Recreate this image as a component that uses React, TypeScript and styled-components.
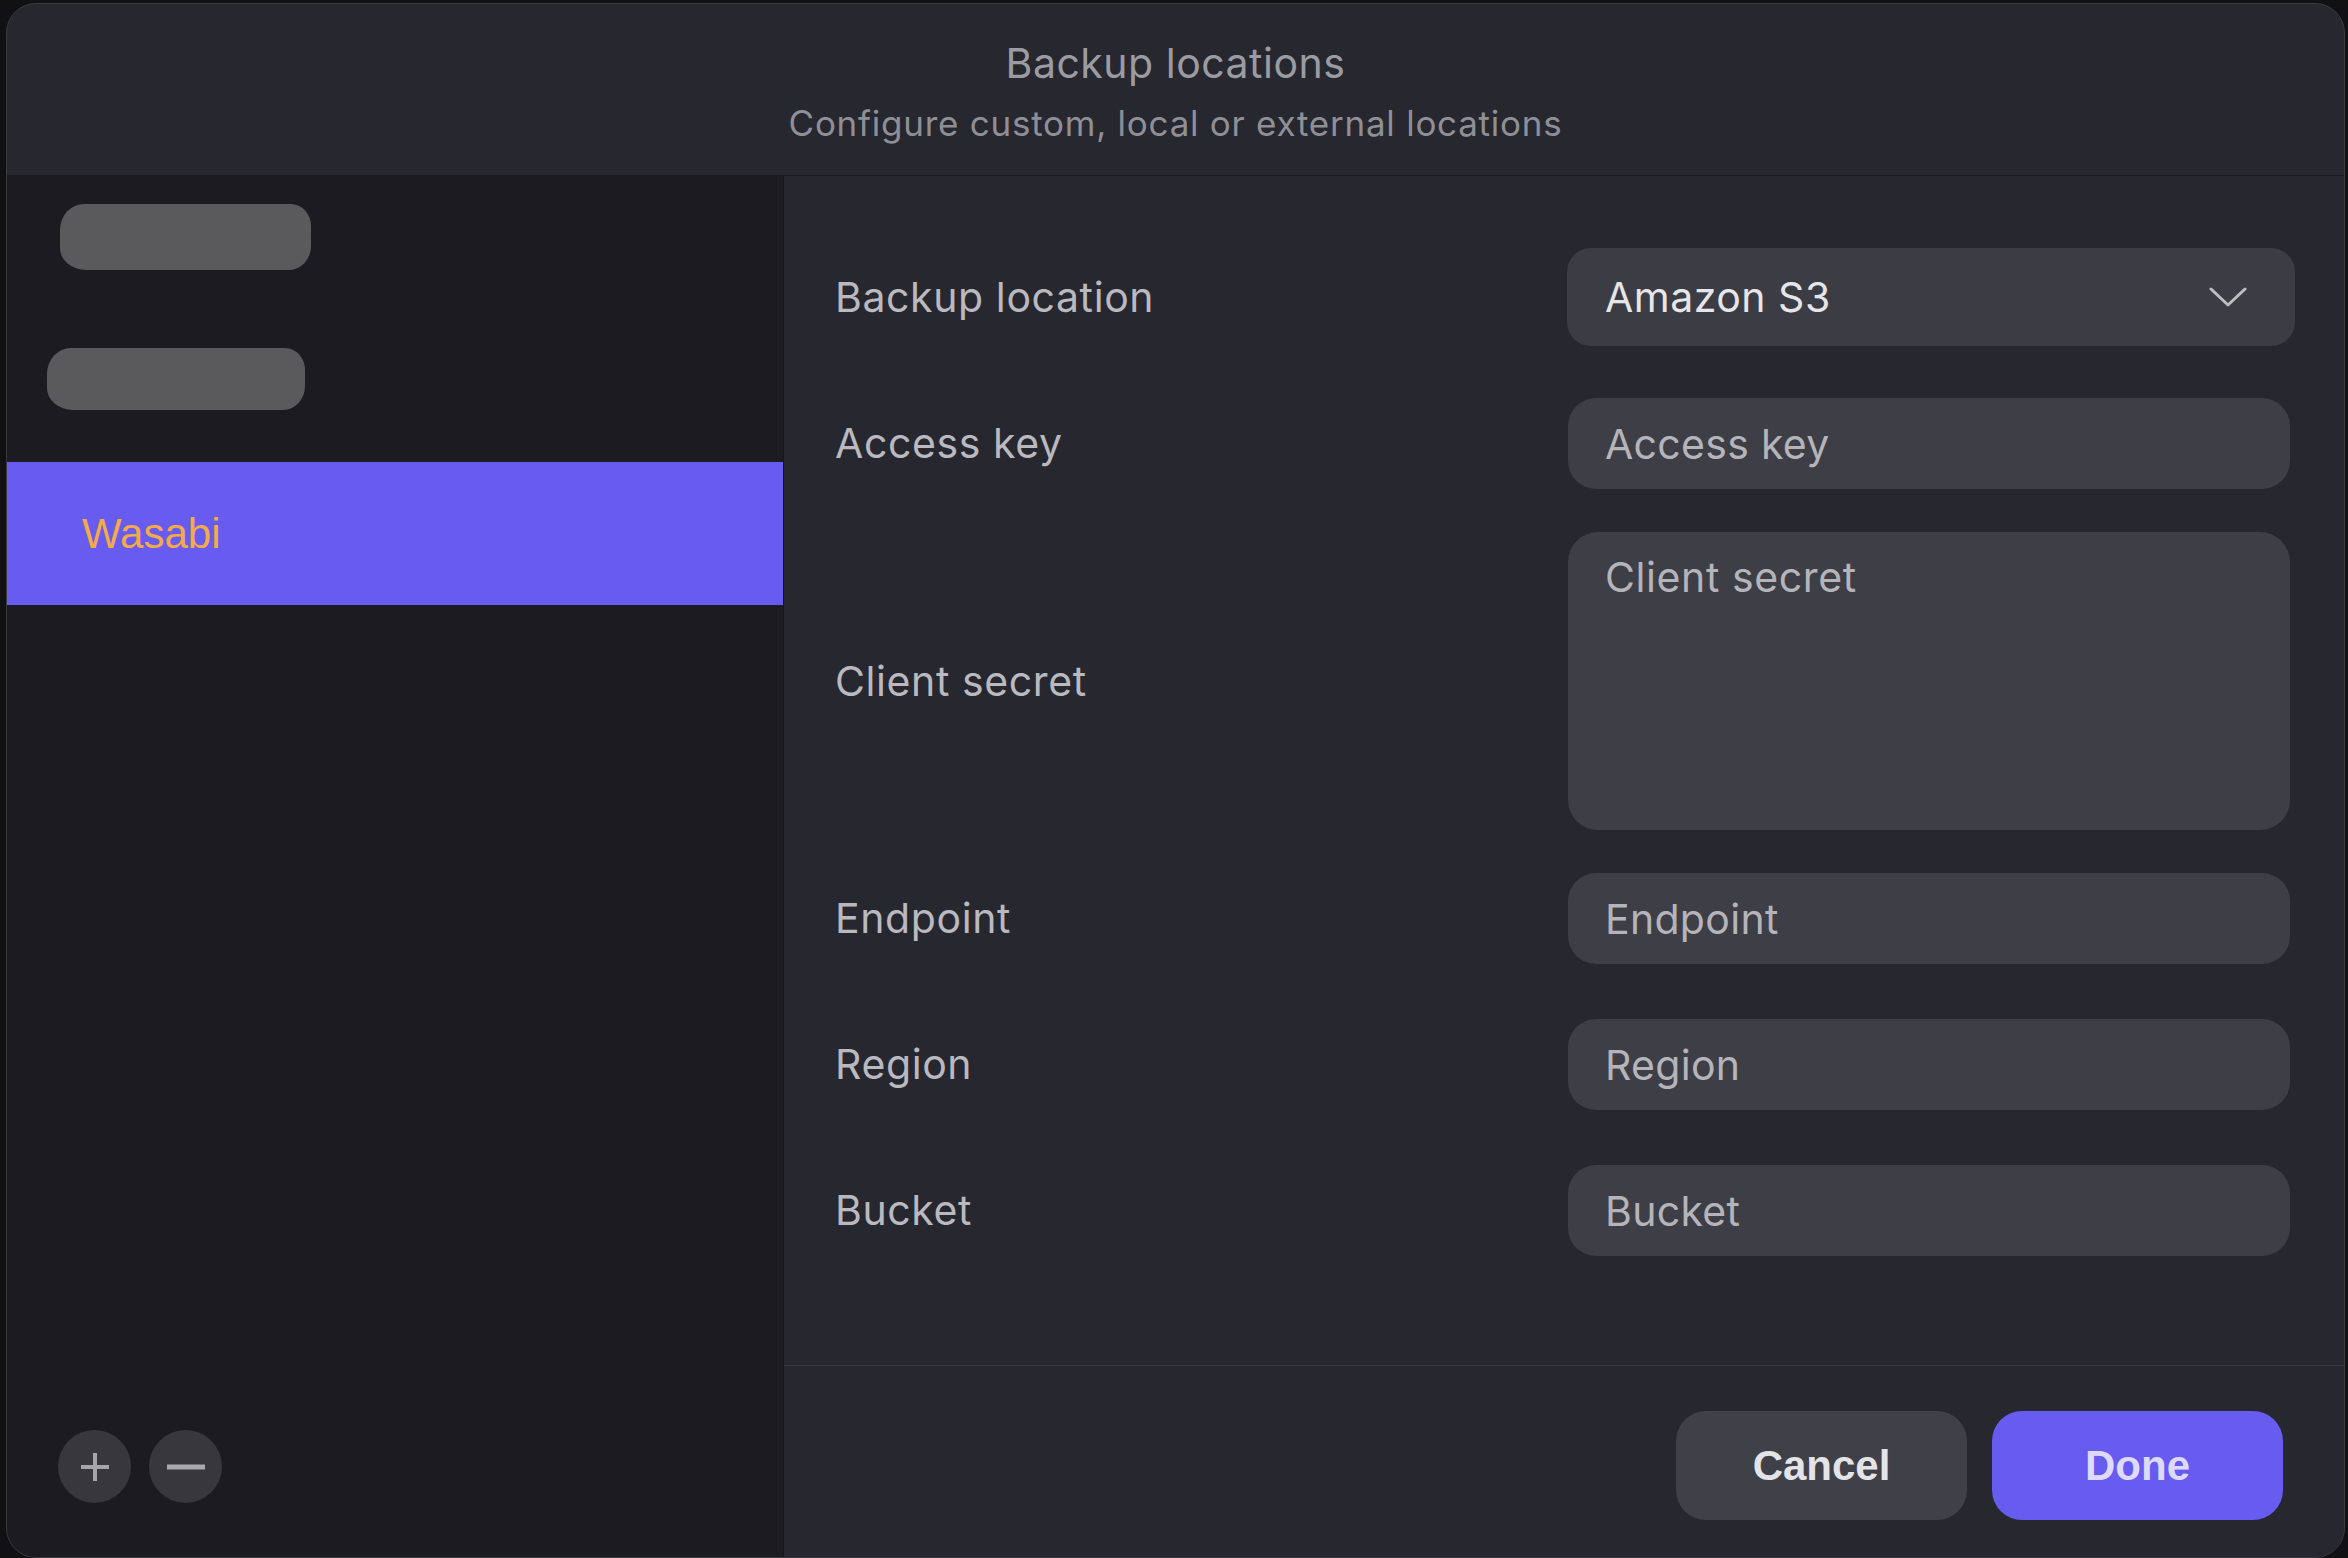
import React from "react";
import styled, { createGlobalStyle } from "styled-components";

const Global = createGlobalStyle`
  html, body { margin: 0; padding: 0; background: #111113; }
  #root { width: 2348px; height: 1558px; overflow: hidden; }
  * { box-sizing: border-box; }
`;

const Page = styled.div`
  width: 2348px;
  height: 1558px;
  padding: 3px 3px 0 6px;
  background: #111113;
`;

const Dialog = styled.div`
  width: 100%;
  height: 100%;
  border: 1px solid #3a3a41;
  border-radius: 30px;
  overflow: hidden;
  display: flex;
  flex-direction: column;
  background: #272730;
`;

const Header = styled.header`
  height: 172px;
  flex: none;
  padding-top: 35px;
  display: flex;
  flex-direction: column;
  align-items: center;
  gap: 14px;
  border-bottom: 1px solid #1a1a1f;
  font-family: Inter, "Noto Sans", sans-serif;
`;

const Title = styled.h1`
  margin: 0;
  font-size: 41px;
  line-height: 49px;
  font-weight: 400;
  color: #9b9ba2;
  letter-spacing: 0.5px;
`;

const Subtitle = styled.p`
  margin: 0;
  font-size: 35px;
  line-height: 42px;
  color: #8f8f96;
  letter-spacing: 0.75px;
`;

const Body = styled.div`
  flex: 1;
  display: flex;
  min-height: 0;
`;

const Sidebar = styled.aside`
  width: 777px;
  flex: none;
  background: #1c1b21;
  border-right: 1px solid #16161a;
  display: flex;
  flex-direction: column;
`;

const List = styled.ul`
  list-style: none;
  margin: 0;
  padding: 0;
  flex: 1;
`;

const Item = styled.li<{ $selected?: boolean }>`
  height: 143px;
  display: flex;
  align-items: center;
  padding-left: 75px;
  background: ${(p) => (p.$selected ? "#675cef" : "transparent")};
  font-family: "Liberation Sans", Arial, sans-serif;
  font-size: 42px;
  color: ${(p) => (p.$selected ? "#f3aa47" : "#c8c8cc")};
`;

const Redaction = styled.span<{ $w: number; $h: number; $dx: number; $dy: number }>`
  display: block;
  width: ${(p) => p.$w}px;
  height: ${(p) => p.$h}px;
  margin-left: ${(p) => p.$dx}px;
  margin-top: ${(p) => p.$dy}px;
  background: #5a5a5d;
  border-radius: 24px 20px 22px 26px / 26px 22px 24px 22px;
`;

const SideFooter = styled.div`
  display: flex;
  gap: 18px;
  padding: 0 0 54px 51px;
`;

const RoundButton = styled.button`
  width: 73px;
  height: 73px;
  border-radius: 50%;
  border: none;
  background: #38373d;
  display: flex;
  align-items: center;
  justify-content: center;
  padding: 0;
  color: #a5a5aa;
`;

const Main = styled.section`
  flex: 1;
  display: flex;
  flex-direction: column;
  background: #272730;
`;

const Form = styled.div`
  flex: 1;
  padding: 72px 49px 0 51px;
  display: flex;
  flex-direction: column;
  font-family: Inter, "Noto Sans", sans-serif;
`;

const FieldRow = styled.div<{ $space: number }>`
  display: flex;
  align-items: center;
  justify-content: space-between;
  margin-top: ${(p) => p.$space}px;
`;

const Label = styled.label`
  font-size: 41px;
  line-height: 49px;
  color: #b9b9bf;
  letter-spacing: 0.6px;
`;

const SelectBox = styled.div`
  width: 728px;
  height: 98px;
  border-radius: 24px;
  background: #3c3c44;
  display: flex;
  align-items: center;
  justify-content: space-between;
  padding: 0 48px 0 38px;
  font-size: 41px;
  color: #e6e6ea;
  letter-spacing: 0.5px;
`;

const TextInput = styled.input`
  width: 722px;
  height: 91px;
  margin-right: 5px;
  border: none;
  outline: none;
  border-radius: 28px;
  background: #3e3e46;
  padding: 0 0 0 37px;
  font-family: Inter, "Noto Sans", sans-serif;
  font-size: 41px;
  letter-spacing: 0.3px;
  color: #e6e6ea;
  &::placeholder { color: #b4b4ba; opacity: 1; }
`;

const TextArea = styled.textarea`
  width: 722px;
  height: 298px;
  margin-right: 5px;
  border: none;
  outline: none;
  resize: none;
  border-radius: 30px;
  background: #3e3e46;
  padding: 21px 37px;
  font-family: Inter, "Noto Sans", sans-serif;
  font-size: 41px;
  line-height: 49px;
  letter-spacing: 0.6px;
  color: #e6e6ea;
  &::placeholder { color: #b4b4ba; opacity: 1; }
`;

const Divider = styled.hr`
  margin: 0;
  border: none;
  border-top: 1px solid #393941;
`;

const Footer = styled.div`
  height: 191px;
  flex: none;
  display: flex;
  justify-content: flex-end;
  align-items: flex-start;
  gap: 25px;
  padding: 45px 61px 0 0;
`;

const ActionButton = styled.button<{ $primary?: boolean }>`
  width: 291px;
  height: 109px;
  border: none;
  border-radius: 30px;
  background: ${(p) => (p.$primary ? "#675cef" : "#404048")};
  color: ${(p) => (p.$primary ? "#dedaff" : "#e4e4e8")};
  font-family: "Liberation Sans", Arial, sans-serif;
  font-weight: 700;
  font-size: 42px;
`;

const fields: { label: string; space: number }[] = [
  { label: "Endpoint", space: 43 },
  { label: "Region", space: 55 },
  { label: "Bucket", space: 55 },
];

export default function App() {
  return (
    <Page>
      <Global />
      <Dialog>
        <Header>
          <Title>Backup locations</Title>
          <Subtitle>Configure custom, local or external locations</Subtitle>
        </Header>
        <Body>
          <Sidebar>
            <List>
              <Item>
                <Redaction $w={251} $h={66} $dx={-22} $dy={-22} />
              </Item>
              <Item>
                <Redaction $w={258} $h={62} $dx={-35} $dy={-24} />
              </Item>
              <Item $selected>Wasabi</Item>
            </List>
            <SideFooter>
              <RoundButton aria-label="Add">
                <svg width="30" height="30" viewBox="0 0 30 30">
                  <path d="M15 1v28M1 15h28" stroke="#a5a5aa" strokeWidth="4" />
                </svg>
              </RoundButton>
              <RoundButton aria-label="Remove">
                <svg width="38" height="10" viewBox="0 0 38 10">
                  <path d="M0 5h38" stroke="#a8a8ae" strokeWidth="5" />
                </svg>
              </RoundButton>
            </SideFooter>
          </Sidebar>
          <Main>
            <Form>
              <FieldRow $space={0}>
                <Label>Backup location</Label>
                <SelectBox>
                  <span>Amazon S3</span>
                  <svg width="38" height="20" viewBox="0 0 38 20">
                    <path d="M2 2l17 16L36 2" fill="none" stroke="#bdbdc2" strokeWidth="3" strokeLinecap="round" strokeLinejoin="round" />
                  </svg>
                </SelectBox>
              </FieldRow>
              <FieldRow $space={52}>
                <Label>Access key</Label>
                <TextInput placeholder="Access key" />
              </FieldRow>
              <FieldRow $space={43}>
                <Label>Client secret</Label>
                <TextArea placeholder="Client secret" />
              </FieldRow>
              {fields.map((f) => (
                <FieldRow key={f.label} $space={f.space}>
                  <Label>{f.label}</Label>
                  <TextInput placeholder={f.label} />
                </FieldRow>
              ))}
            </Form>
            <Divider />
            <Footer>
              <ActionButton>Cancel</ActionButton>
              <ActionButton $primary>Done</ActionButton>
            </Footer>
          </Main>
        </Body>
      </Dialog>
    </Page>
  );
}
